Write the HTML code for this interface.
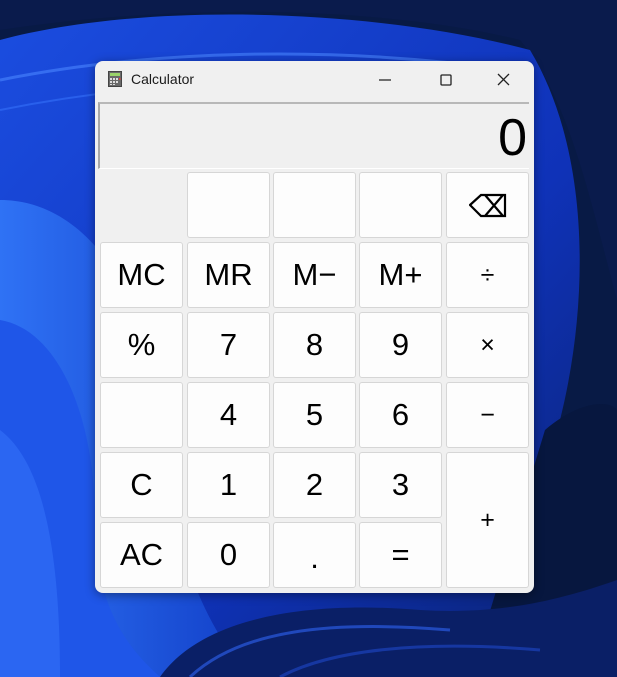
<!DOCTYPE html>
<html><head><meta charset="utf-8"><style>
*{margin:0;padding:0;box-sizing:border-box}
body{width:617px;height:677px;overflow:hidden;position:relative;background:#081a4a;font-family:"Liberation Sans",sans-serif}
.bg{position:absolute;left:0;top:0}
.win{position:absolute;left:95px;top:61px;width:439px;height:532px;background:#f0f0f0;border-radius:8px;box-shadow:0 2px 10px rgba(0,0,0,.4);overflow:hidden}
.title{position:absolute;left:36px;top:10px;font-size:14px;color:#1a1a1a}
.disp{position:absolute;left:3px;top:41px;width:431px;height:67px;background:#f0f0f0;border-top:2px solid #b8b8b8;border-left:2px solid #a8a8a8;border-bottom:1px solid #fff}
.disp span{position:absolute;right:2px;top:4px;font-size:52px;color:#000}
.b{position:absolute;width:83px;height:66px;background:#fdfdfd;border:1px solid #d6d6d6;border-radius:3px;display:flex;align-items:center;justify-content:center;font-size:31px;color:#000}
.o{font-size:25px}
</style></head><body>
<svg class="bg" width="617" height="677" viewBox="0 0 617 677">
<defs>
<linearGradient id="g1" x1="0" y1="0" x2="1" y2="1"><stop offset="0" stop-color="#1b4de0"/><stop offset=".6" stop-color="#0f32b8"/><stop offset="1" stop-color="#0a2270"/></linearGradient>
<linearGradient id="g2" x1="0" y1="0" x2="1" y2="0"><stop offset="0" stop-color="#2f72f5"/><stop offset="1" stop-color="#1240c8"/></linearGradient>
</defs>
<rect width="617" height="677" fill="#081a45"/>
<path d="M0 0 H617 V300 C590 200 570 100 520 40 C400 10 200 0 0 30Z" fill="#0a1b4c"/>
<path d="M0 40 C150 0 380 10 530 50 C590 150 590 300 560 420 L520 677 L0 677Z" fill="url(#g1)"/>
<path d="M0 80 C150 50 330 45 510 70" stroke="#4a86ff" stroke-width="3" fill="none" opacity=".6"/>
<path d="M0 110 C150 80 330 70 520 100" stroke="#3a78ff" stroke-width="2" fill="none" opacity=".5"/>
<path d="M0 200 C90 200 150 300 160 420 C170 540 200 620 250 677 L0 677Z" fill="url(#g2)"/>
<path d="M0 320 C60 330 95 420 95 520 C95 610 130 650 160 677 L0 677Z" fill="#1f56e8"/>
<path d="M0 430 C40 460 60 540 60 677 L0 677Z" fill="#2b66f2"/>
<path d="M545 430 C580 400 610 400 617 410 L617 677 L470 677Z" fill="#07173f"/>
<path d="M160 677 C200 620 300 600 420 610 C500 615 560 600 617 580 L617 677Z" fill="#0a1f66"/>
<path d="M190 677 C240 630 330 620 450 630" stroke="#2a5ae0" stroke-width="3" fill="none" opacity=".7"/>
<path d="M280 677 C330 650 420 640 540 650" stroke="#1e48c8" stroke-width="3" fill="none" opacity=".6"/>
</svg>
<div class="win">
<svg style="position:absolute;left:13px;top:10px" width="14" height="16" viewBox="0 0 14 16"><rect x=".5" y=".5" width="13" height="15" fill="#6a6a6a" stroke="#444"/><rect x="2" y="2" width="10" height="3" fill="#9bd36a"/><g fill="#ddd"><rect x="2" y="7" width="2" height="2"/><rect x="5" y="7" width="2" height="2"/><rect x="8" y="7" width="2" height="2"/><rect x="2" y="10" width="2" height="2"/><rect x="5" y="10" width="2" height="2"/><rect x="8" y="10" width="2" height="2"/><rect x="2" y="13" width="2" height="1"/><rect x="5" y="13" width="2" height="1"/></g><rect x="11" y="7" width="1.5" height="2" fill="#e04040"/></svg>
<div class="title">Calculator</div>
<svg style="position:absolute;left:280px;top:8px" width="150" height="22"><line x1="4" y1="11" x2="16" y2="11" stroke="#222" stroke-width="1.2"/><rect x="66" y="6" width="10" height="10" rx="1" fill="none" stroke="#222" stroke-width="1.3"/><path d="M123 5 L134 16 M134 5 L123 16" stroke="#222" stroke-width="1.3"/></svg>
<div class="disp"><span>0</span></div>
</div>
<div class="b" style="left:187px;top:172px"></div>
<div class="b" style="left:273px;top:172px"></div>
<div class="b" style="left:359px;top:172px"></div>
<div class="b" style="left:446px;top:172px"><svg width="38" height="26" viewBox="0 0 38 26"><path d="M1 13 L12 3 H36 V24 H12 Z M16 3 L34 24 M34 3 L16 24" fill="none" stroke="#000" stroke-width="2.2"/></svg></div>
<div class="b" style="left:100px;top:242px">MC</div>
<div class="b" style="left:187px;top:242px">MR</div>
<div class="b" style="left:273px;top:242px">M−</div>
<div class="b" style="left:359px;top:242px">M+</div>
<div class="b o" style="left:446px;top:242px">÷</div>
<div class="b" style="left:100px;top:312px">%</div>
<div class="b" style="left:187px;top:312px">7</div>
<div class="b" style="left:273px;top:312px">8</div>
<div class="b" style="left:359px;top:312px">9</div>
<div class="b o" style="left:446px;top:312px">×</div>
<div class="b" style="left:100px;top:382px"></div>
<div class="b" style="left:187px;top:382px">4</div>
<div class="b" style="left:273px;top:382px">5</div>
<div class="b" style="left:359px;top:382px">6</div>
<div class="b o" style="left:446px;top:382px">−</div>
<div class="b" style="left:100px;top:452px">C</div>
<div class="b" style="left:187px;top:452px">1</div>
<div class="b" style="left:273px;top:452px">2</div>
<div class="b" style="left:359px;top:452px">3</div>
<div class="b o" style="left:446px;top:452px;height:136px">+</div>
<div class="b" style="left:100px;top:522px">AC</div>
<div class="b" style="left:187px;top:522px">0</div>
<div class="b" style="left:273px;top:522px;padding-top:6px">.</div>
<div class="b" style="left:359px;top:522px">=</div>
</body></html>
